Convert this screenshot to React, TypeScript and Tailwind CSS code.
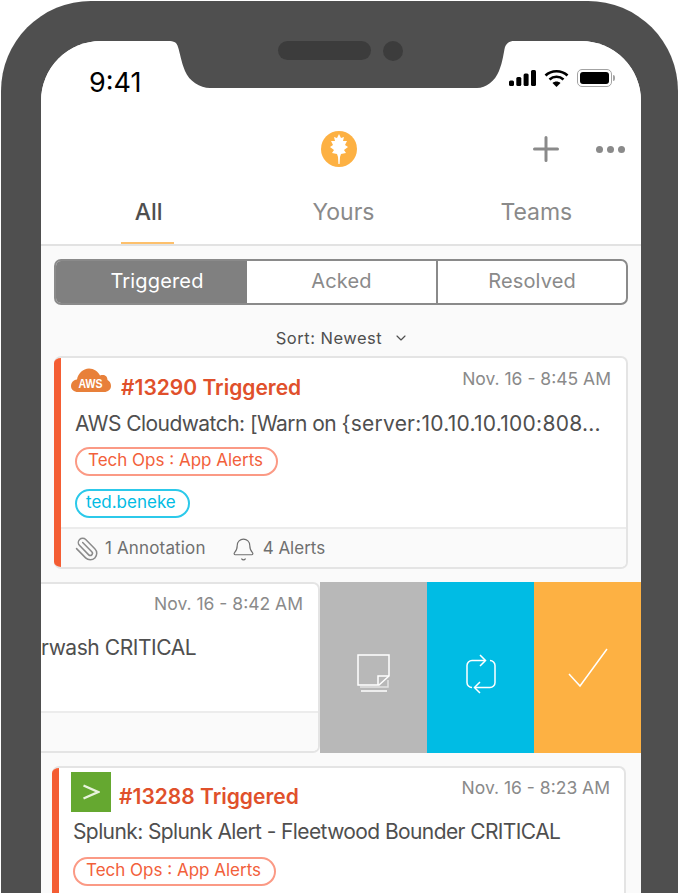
import { ChevronDown, Bell, Paperclip } from 'lucide-react';

const font = "font-['Inter','Noto_Sans',sans-serif]";

function Leaf() {
  return (
    <svg width="38" height="38" viewBox="0 0 38 38">
      <circle cx="19" cy="19" r="18" fill="#fdb143" />
      <path
        d="M19 4L21 8L24 7L23 11L27 11L25 15L28 17L24 20L26 23L21 24L20 27L19.6 34L18.4 34L18 27L17 24L12 23L14 20L10 17L13 15L11 11L15 11L14 7L17 8Z"
        fill="#fff"
      />
    </svg>
  );
}

function Signal() {
  return (
    <svg width="27" height="16" viewBox="0 0 27 16" fill="#000">
      <rect x="0" y="10.5" width="5" height="5.5" rx="1.5" />
      <rect x="7.3" y="7" width="5" height="9" rx="1.5" />
      <rect x="14.6" y="3.5" width="5" height="12.5" rx="1.5" />
      <rect x="22" y="0" width="5" height="16" rx="1.5" />
    </svg>
  );
}

function Wifi() {
  return (
    <svg width="25" height="18" viewBox="0 0 25 18" fill="none" stroke="#000" strokeWidth="2.6">
      <path d="M1.5 6.5C7.5 .8 17.5 .8 23.5 6.5" />
      <path d="M5.5 10.5c4-3.6 10-3.6 14 0" />
      <path d="M12.5 18l-4-4c2.2-2 5.8-2 8 0z" fill="#000" stroke="none" />
    </svg>
  );
}

function Battery() {
  return (
    <div className="flex items-center">
      <div className="w-[35px] h-[18px] rounded-[5px] border border-[#a3a3a3] p-[2px]">
        <div className="w-full h-full rounded-[3px] bg-black" />
      </div>
      <div className="w-[2px] h-[6px] rounded-r-sm bg-[#a3a3a3] ml-[1px]" />
    </div>
  );
}

function AwsLogo() {
  return (
    <svg width="40" height="26" viewBox="0 0 40 26">
      <path
        d="M7 25C3 25 0 22.5 0 19c0-3 2-6 6-6.5 1-6 6-11 12-11 5 0 9 3 11 7 1-.5 2-.5 3-.5 3 0 4.5 2.5 4.5 5 2 1 3.5 3 3.5 6 0 3.5-3 6-7 6z"
        fill="#e8803a"
      />
      <text
        x="19.5"
        y="21"
        textAnchor="middle"
        fontSize="12.5"
        fontWeight="600"
        textLength={24}
        lengthAdjust="spacingAndGlyphs"
        fill="#fff"
        fontFamily="'Liberation Sans',sans-serif"
      >
        AWS
      </text>
    </svg>
  );
}

function SplunkLogo() {
  return (
    <div className="w-10 h-10 bg-[#65a830] flex items-center justify-center shrink-0">
      <svg width="18" height="16" viewBox="0 0 18 16" fill="none" stroke="#e8f3dc" strokeWidth="2.4">
        <path d="M1.5 1.5L16 8L1.5 14.5" />
      </svg>
    </div>
  );
}

function Pill({ blue, children }: { blue?: boolean; children: string }) {
  return (
    <span
      className={
        blue
          ? 'inline-flex h-[29px] items-center rounded-full border-2 border-[#2cc9ea] pl-[9px] pr-[12px] text-[17px] text-[#00bce4]'
          : 'inline-flex h-[29px] items-center rounded-full border-2 border-[#fb9a85] pl-[11px] pr-[13px] text-[17px] text-[#f2603a]'
      }
    >
      {children}
    </span>
  );
}

export default function App() {
  return (
    <div className={`w-[678px] h-[893px] overflow-hidden bg-white pt-px pl-px ${font}`}>
      <div className="relative w-[677px] h-[892px] bg-[#4f4f4f] rounded-t-[90px] pl-10 pr-[37px] pt-10">
        {/* notch */}
        <div className="absolute top-10 left-[167px] w-[346px] h-[48px] z-10 flex items-start gap-[12px] pl-[110px]">
          <svg className="absolute inset-0" width="346" height="48" viewBox="0 0 346 48" fill="#4f4f4f">
            <path d="M0 0H346C342 0 338.5 1.5 337 6C335.5 12 335 20 331 30C327 40 318 47 309 47H42C32 47 21 40 17 30C13 20 12 12 10 6C9 1.5 6 0 0 0Z" />
          </svg>
          <div className="relative w-[93px] h-[19px] rounded-full bg-[#3c3c3c]" />
          <div className="relative w-[20px] h-[20px] rounded-full bg-[#3c3c3c]" />
        </div>

        <div className="w-[600px] h-[852px] bg-[#fafafa] rounded-t-[60px] overflow-hidden">
          {/* status bar + header */}
          <div className="bg-white h-[205px] border-b-2 border-[#e2e2e2]">
            <div className="flex items-center justify-between pl-[48px] pr-[26px] pt-[27px] h-[60px]">
              <span className="text-[27px] leading-none text-black mb-[4px]">9:41</span>
              <div className="flex items-center gap-[8px] mb-[14px]">
                <Signal />
                <Wifi />
                <Battery />
              </div>
            </div>
            <div className="relative flex items-center justify-center h-[38px] mt-[29px]">
              <div className="mr-[4px]"><Leaf /></div>
              <div className="absolute right-[16px] top-0 flex items-center gap-[37px] h-full">
                <svg width="26" height="26" viewBox="0 0 26 26" stroke="#8a8a8a" strokeWidth="3" strokeLinecap="round">
                  <path d="M13 1.5v23M1.5 13h23" />
                </svg>
                <div className="flex gap-[4px]">
                  <div className="w-[7px] h-[7px] rounded-full bg-[#8a8a8a]" />
                  <div className="w-[7px] h-[7px] rounded-full bg-[#8a8a8a]" />
                  <div className="w-[7px] h-[7px] rounded-full bg-[#8a8a8a]" />
                </div>
              </div>
            </div>
            <div className="grid grid-cols-3 mt-[29px] pl-[12px] pr-[8px] text-[23px] leading-[30px] text-[#8a8a8a] text-center">
              <div className="relative h-[47px] pr-[2px]">
                <span className="font-medium text-[#4f4f4f]">All</span>
                <div className="absolute bottom-0 left-[68px] w-[53px] h-[2px] bg-[#fdc06c]" />
              </div>
              <div className="h-[47px] pl-[1px]">Yours</div>
              <div className="h-[47px]">Teams</div>
            </div>
          </div>

          {/* segmented filter */}
          <div className="px-[13px] pt-[13px]">
            <div className="grid grid-cols-[191px_191px_1fr] h-[46px] rounded-[7px] border-2 border-[#8a8a8a] overflow-hidden text-[20px] tracking-[0.15px] bg-white text-[#8a8a8a] text-center">
              <div className="bg-[#808080] text-white flex items-center justify-center pl-[11px] pb-[2px]">Triggered</div>
              <div className="border-r-2 border-[#8a8a8a] flex items-center justify-center pb-[2px]">Acked</div>
              <div className="flex items-center justify-center pb-[2px]">Resolved</div>
            </div>
          </div>

          <div className="flex items-center justify-center gap-[11px] h-[26px] mt-[20px] mb-[5px] pl-[3px] text-[16.5px] text-[#4f4f4f] tracking-[0.5px]">
            Sort: Newest
            <ChevronDown size={16} strokeWidth={1.75} />
          </div>

          {/* card 1 */}
          <div className="mx-[13px] h-[213px] rounded-[7px] border-2 border-l-0 border-[#e4e4e4] bg-white overflow-hidden flex">
            <div className="w-[7px] bg-[#f45d33]" />
            <div className="flex-1 flex flex-col min-w-0">
              <div className="flex-1 pl-[14px] pr-[15px] pt-[8px]">
                <div className="flex items-start h-[42px]">
                  <div className="-ml-[4px] mt-[1px]"><AwsLogo /></div>
                  <span className="ml-[10px] mt-[6px] text-[21px] font-semibold text-[#e0502b]">#13290 Triggered</span>
                  <span className="ml-auto text-[17.5px] text-[#8a8a8a]">Nov. 16 - 8:45 AM</span>
                </div>
                <div className="text-[21px] text-[#4f4f4f] whitespace-nowrap">
                  <span className="tracking-[-0.55px]">AWS Cloudwatch: [Warn on </span>
                  <span className="tracking-[0.25px]">{'{'}server:10.10.10.100:808...</span>
                </div>
                <div className="mt-[7px]"><Pill>Tech Ops : App Alerts</Pill></div>
                <div className="mt-[13px]"><Pill blue>ted.beneke</Pill></div>
              </div>
              <div className="h-[40px] border-t-2 border-[#ececec] bg-[#fafafa] flex items-center pl-[13px] pt-[2px] text-[17px] text-[#6f6f6f]">
                <Paperclip size={26} strokeWidth={1.4} className="-scale-x-100 text-[#8a8a8a]" />
                <span className="ml-[5px] tracking-[0.15px]">1 Annotation</span>
                <Bell size={25} strokeWidth={1.1} className="ml-[25px] text-[#6f6f6f]" />
                <span className="ml-[7px]">4 Alerts</span>
              </div>
            </div>
          </div>

          {/* swiped card with actions */}
          <div className="flex h-[171px] mt-[13px]">
            <div className="w-[279px] rounded-r-[7px] border-2 border-l-0 border-[#e4e4e4] bg-white flex flex-col overflow-hidden">
              <div className="flex-1 pr-[15px] pt-[7px] text-right">
                <div className="text-[17.5px] text-[#8a8a8a]">Nov. 16 - 8:42 AM</div>
                <div className="text-left text-[21px] tracking-[-0.45px] text-[#4f4f4f] mt-[15px] whitespace-nowrap">rwash CRITICAL</div>
              </div>
              <div className="h-[40px] border-t-2 border-[#ececec] bg-[#fafafa]" />
            </div>
            <div className="w-[107px] bg-[#b8b8b8] flex items-center justify-center pt-[12px]">
              <svg width="34" height="40" viewBox="0 0 34 40" fill="none" stroke="#fff" strokeWidth="1.5">
                <path d="M1 1h31v21L22 31H1z" />
                <path d="M32 22H21v9" />
                <path d="M31 26v7H3" opacity=".6" />
                <path d="M4 37h26" />
              </svg>
            </div>
            <div className="w-[107px] bg-[#00bce4] flex items-center justify-center pt-[12px]">
              <svg width="30" height="40" viewBox="0 0 30 40" fill="none" stroke="#fff" strokeWidth="1.5">
                <path d="M19 6.5H6a5 5 0 0 0-5 5v17a5 5 0 0 0 5 5" />
                <path d="M9 33.5H24a5 5 0 0 0 5-5v-17a5 5 0 0 0-5-5" />
                <path d="M14 1l5.5 5.5L14 12" />
                <path d="M14 28l-5.5 5.5L14 39" />
              </svg>
            </div>
            <div className="w-[107px] bg-[#fdb143] flex items-center justify-center">
              <svg width="40" height="40" viewBox="0 0 40 40" fill="none" stroke="#fff" strokeWidth="1.5">
                <path d="M1 26l11 12L39 1" />
              </svg>
            </div>
          </div>

          {/* card 3 */}
          <div className="ml-[11px] mr-[15px] mt-[13px] h-[160px] rounded-t-[7px] border-2 border-l-0 border-b-0 border-[#e4e4e4] bg-white overflow-hidden flex">
            <div className="w-[7px] bg-[#f45d33]" />
            <div className="flex-1 pl-[12px] pr-[14px] pt-[4px] min-w-0">
              <div className="flex items-start h-[43px]">
                <SplunkLogo />
                <span className="ml-[8px] mt-[9px] text-[21px] font-semibold text-[#e0502b]">#13288 Triggered</span>
                <span className="ml-auto mt-[3px] text-[17.5px] text-[#8a8a8a]">Nov. 16 - 8:23 AM</span>
              </div>
              <div className="ml-[2px] mt-[1px] text-[21px] tracking-[-0.6px] text-[#4f4f4f] whitespace-nowrap">
                Splunk: Splunk Alert - Fleetwood Bounder CRITICAL
              </div>
              <div className="ml-[2px] mt-[9px]"><Pill>Tech Ops : App Alerts</Pill></div>
            </div>
          </div>
        </div>
      </div>
    </div>
  );
}
